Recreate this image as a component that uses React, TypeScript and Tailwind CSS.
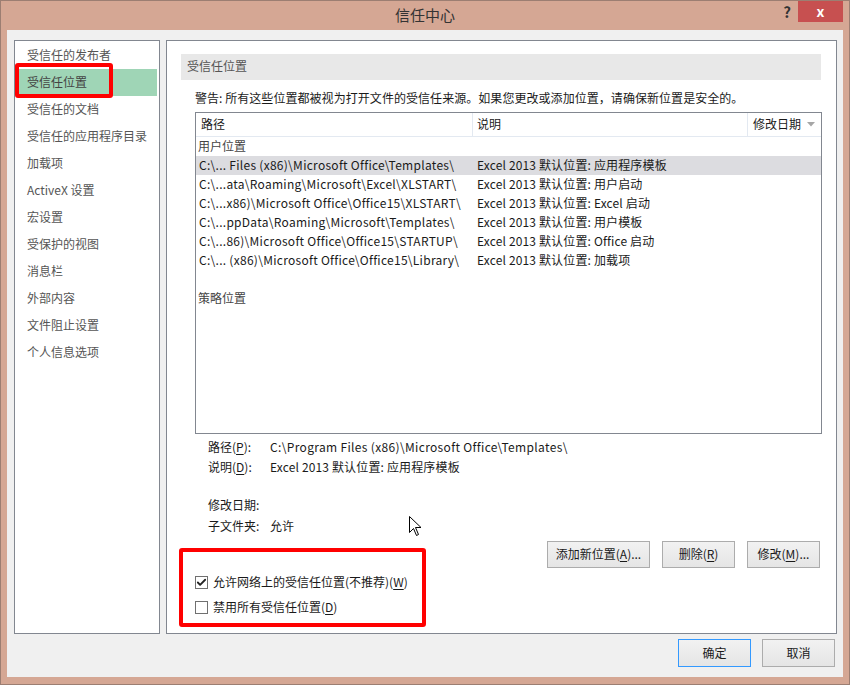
import { Check } from 'lucide-react';

const navItems = [
  '受信任的发布者',
  '受信任位置',
  '受信任的文档',
  '受信任的应用程序目录',
  '加载项',
  'ActiveX 设置',
  '宏设置',
  '受保护的视图',
  '消息栏',
  '外部内容',
  '文件阻止设置',
  '个人信息选项',
];

const rows = [
  ['C:\\... Files (x86)\\Microsoft Office\\Templates\\', 'Excel 2013 默认位置: 应用程序模板'],
  ['C:\\...ata\\Roaming\\Microsoft\\Excel\\XLSTART\\', 'Excel 2013 默认位置: 用户启动'],
  ['C:\\...x86)\\Microsoft Office\\Office15\\XLSTART\\', 'Excel 2013 默认位置: Excel 启动'],
  ['C:\\...ppData\\Roaming\\Microsoft\\Templates\\', 'Excel 2013 默认位置: 用户模板'],
  ['C:\\...86)\\Microsoft Office\\Office15\\STARTUP\\', 'Excel 2013 默认位置: Office 启动'],
  ['C:\\... (x86)\\Microsoft Office\\Office15\\Library\\', 'Excel 2013 默认位置: 加载项'],
];

const font = { fontFamily: '"Noto Sans CJK SC", "Noto Sans", sans-serif' };

const Btn = ({ children, w, primary }: { children: React.ReactNode; w: string; primary?: boolean }) => (
  <div
    className={`${w} flex items-center justify-center pb-[1px] border bg-gradient-to-b from-[#f2f2f2] to-[#e5e5e5] text-[12px] text-[#1a1a1a] ${
      primary ? 'border-[#3399ff]' : 'border-[#acacac]'
    }`}
  >
    {children}
  </div>
);

const U = ({ c }: { c: string }) => <span className="underline underline-offset-2">{c}</span>;

export default function App() {
  return (
    <div
      className="relative w-[850px] h-[685px] bg-[#d5a794] border border-[#9c7e72] flex flex-col text-[12px] overflow-hidden"
      style={font}
    >
      {/* title bar */}
      <div className="relative h-[29px] flex items-center justify-center shrink-0">
        <span className="text-[15px] text-[#333] mb-[1px]">信任中心</span>
        <span className="absolute right-[58px] top-0 text-[15px] font-bold text-[#333]">?</span>
        <div className="absolute right-[6px] top-0 w-[45px] h-[21px] bg-[#c75050] flex items-center justify-center text-white text-[14px] font-bold">
          x
        </div>
      </div>

      {/* client */}
      <div className="flex-1 mx-[6px] mb-[7px] bg-[#f0f0f0] flex flex-col px-[7px] pt-[10px] pr-[6px]">
        <div className="flex gap-[6px] h-[594px]">
          {/* left nav */}
          <div className="w-[146px] bg-white border border-[#828790] pt-[1px]">
            {navItems.map((t, i) => (
              <div
                key={t}
                className={`h-[27px] flex items-center mx-[2px] pl-[10px] pb-[2px] ${
                  i === 1 ? 'bg-[#9fd5b6] text-[#444]' : 'text-[#555]'
                }`}
              >
                {t}
              </div>
            ))}
          </div>

          {/* right panel */}
          <div className="flex-1 bg-white border border-[#828790] flex flex-col">
            <div className="mt-[13px] ml-[14px] w-[640px] h-[26px] bg-[#e8e8e8] flex items-center pl-[6px] pb-[2px] text-[#555]">
              受信任位置
            </div>
            <div className="mt-[9px] ml-[28px] h-[19px] flex items-center pb-[1px] text-[#1a1a1a] tracking-[0.05px]">
              警告: 所有这些位置都被视为打开文件的受信任来源。如果您更改或添加位置，请确保新位置是安全的。
            </div>

            {/* table */}
            <div className="mt-[4px] ml-[28px] w-[627px] h-[322px] border border-[#828790] bg-white flex flex-col text-[#1a1a1a]">
              <div className="flex h-[24px] border-b border-[#e3e9f1]">
                <div className="w-[277px] pl-[5px] pb-[1px] flex items-center border-r border-[#e3e9f1]">路径</div>
                <div className="w-[275px] pl-[4px] pb-[1px] flex items-center border-r border-[#e3e9f1]">说明</div>
                <div className="flex-1 pl-[5px] pb-[1px] flex items-center gap-[6px]">
                  修改日期
                  <svg width="8" height="5" viewBox="0 0 8 5">
                    <path d="M0 0h8L4 4.5z" fill="#a6a6a6" />
                  </svg>
                </div>
              </div>
              <div className="h-[19px] flex items-center pl-[2px] pb-[1px] text-[#444]">用户位置</div>
              {rows.map(([p, d], i) => (
                <div
                  key={p}
                  className={`h-[19px] flex items-center pb-[1px] ${i === 0 ? 'bg-[#dcdce0]' : ''}`}
                >
                  <div className="w-[277px] pl-[3px] whitespace-nowrap tracking-[0.28px]">{p}</div>
                  <div className="pl-[4px] whitespace-nowrap tracking-[0.15px]">{d}</div>
                </div>
              ))}
              <div className="h-[19px]" />
              <div className="h-[19px] flex items-center pl-[2px] pb-[1px] text-[#444]">策略位置</div>
            </div>

            {/* details */}
            <div className="ml-[41px] mt-[3px] text-[#1a1a1a]">
              <div className="h-[20px] flex items-center pb-[1px]">
                <span className="w-[62px]">
                  路径(<U c="P" />):
                </span>
                <span className="tracking-[0.34px]">C:\Program Files (x86)\Microsoft Office\Templates\</span>
              </div>
              <div className="h-[20px] flex items-center pb-[1px]">
                <span className="w-[62px]">
                  说明(<U c="D" />):
                </span>
                <span className="tracking-[0.15px]">Excel 2013 默认位置: 应用程序模板</span>
              </div>
              <div className="h-[20px] flex items-center pb-[1px] mt-[18px]">
                <span className="w-[62px]">修改日期:</span>
              </div>
              <div className="h-[20px] flex items-center pb-[1px] mt-[1px]">
                <span className="w-[62px]">子文件夹:</span>
                <span>允许</span>
              </div>
            </div>

            <div className="mt-[5px] mr-[16px] flex justify-end gap-[12px] h-[27px]">
              <Btn w="w-[103px]">
                添加新位置(<U c="A" />)...
              </Btn>
              <Btn w="w-[73px]">
                删除(<U c="R" />)
              </Btn>
              <Btn w="w-[73px]">
                修改(<U c="M" />)...
              </Btn>
            </div>

            <div className="ml-[28px] mt-[4px] h-[20px] flex items-center gap-[5px] text-[#1a1a1a]">
              <div className="w-[13px] h-[13px] border border-[#707070] bg-white flex items-center justify-center">
                <Check size={11} strokeWidth={4} color="#222" />
              </div>
              <span className="mb-[1px]">
                允许网络上的受信任位置(不推荐)(<U c="W" />)
              </span>
            </div>
            <div className="ml-[28px] mt-[5px] h-[20px] flex items-center gap-[5px] text-[#1a1a1a]">
              <div className="w-[13px] h-[13px] border border-[#707070] bg-white" />
              <span className="mb-[1px]">
                禁用所有受信任位置(<U c="D" />)
              </span>
            </div>
          </div>
        </div>

        <div className="mt-[5px] flex justify-end gap-[11px] h-[28px] pr-[2px]">
          <Btn w="w-[73px]" primary>
            确定
          </Btn>
          <Btn w="w-[73px]">取消</Btn>
        </div>
      </div>

      {/* annotation boxes */}
      <div className="absolute left-[14px] top-[62px] w-[98px] h-[35px] border-[4px] border-[#ff0000] rounded-[3px]" />
      <div className="absolute left-[178px] top-[547px] w-[247px] h-[79px] border-[4px] border-[#ff0000] rounded-[3px]" />

      {/* mouse cursor */}
      <svg className="absolute left-[408px] top-[515px]" width="13" height="21" viewBox="0 0 13 21">
        <path d="M0.5 0.5V16.5L4.5 12.5L7.5 19.5L9.5 18.5L6.5 11.5H12L0.5 0.5Z" fill="white" stroke="black" strokeWidth="1" />
      </svg>
    </div>
  );
}
